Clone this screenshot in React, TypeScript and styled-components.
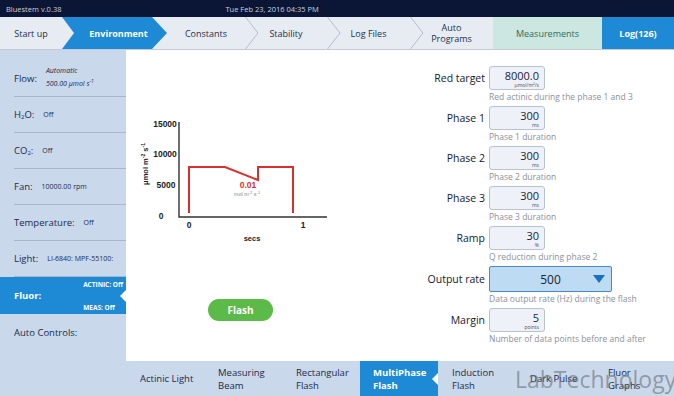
import React from 'react';
import styled, { createGlobalStyle, css } from 'styled-components';

const GlobalStyle = createGlobalStyle`
  html, body {
    margin: 0;
    padding: 0;
    background: #ffffff;
  }
  body {
    font-family: 'Open Sans', 'Noto Sans', sans-serif;
    color: #1b2b4b;
  }
`;

const Screen = styled.div`
  position: relative;
  width: 674px;
  height: 396px;
  overflow: hidden;
  display: grid;
  grid-template-columns: 126px 1fr;
  grid-template-rows: 17px 33px 1fr 35px;
`;

const Header = styled.div`
  grid-column: 1 / 3;
  background: #0b1636;
  color: #c9d0de;
  font-size: 7.5px;
  display: flex;
  align-items: center;
  padding-left: 6px;

  span.date {
    margin-left: 164px;
  }
`;

const TabBar = styled.div`
  grid-column: 1 / 3;
  background: #e7ecf3;
  border-bottom: 1px solid #c4cbd6;
  display: flex;
`;

const Tab = styled.div<{ $w?: number; $variant?: 'active' | 'green' | 'log' }>`
  ${({ $w }) => ($w ? `width: ${$w}px;` : 'flex: 1;')}
  box-sizing: border-box;
  flex-shrink: 0;
  display: flex;
  align-items: stretch;
  font-size: 9px;
  color: #1e2e4c;

  ${({ $variant }) =>
    $variant === 'active' &&
    css`
      background: #1e8ad6;
      color: #ffffff;
      font-weight: 700;
      padding-left: 8px;
      clip-path: polygon(0 0, calc(100% - 15px) 0, 100% 50%, calc(100% - 15px) 100%, 0 100%, 12px 50%);
    `}
  ${({ $variant }) =>
    $variant === 'green' &&
    css`
      background: #cbe7df;
      color: #2e6d5d;
    `}
  ${({ $variant }) =>
    $variant === 'log' &&
    css`
      background: #1e8ad6;
      color: #ffffff;
      font-weight: 700;
    `}
`;

const TabLabel = styled.div`
  flex: 1;
  display: flex;
  align-items: center;
  justify-content: center;
  text-align: center;
  line-height: 11px;
`;

const ChevronLine = styled.svg`
  flex-shrink: 0;
  width: 14px;
  height: 32px;
  margin-right: -14px;
`;

const Sidebar = styled.div`
  grid-column: 1;
  grid-row: 3 / 5;
  background: #c9d8ea;
  padding-top: 10px;
  display: flex;
  flex-direction: column;
`;

const SideRow = styled.div<{ $h?: number; $divider?: boolean }>`
  height: ${({ $h }) => $h ?? 36}px;
  margin-left: 14px;
  display: flex;
  align-items: center;
  gap: 9px;
  white-space: nowrap;
  overflow: hidden;
  box-sizing: border-box;
  ${({ $divider }) => $divider && 'border-bottom: 1px solid #a9b7c9;'}
`;

const SideLabel = styled.span`
  font-size: 9.5px;
  color: #1b2b4b;

  sub {
    font-size: 6px;
    vertical-align: -1px;
  }
`;

const SideValue = styled.span<{ $italic?: boolean }>`
  font-size: 7px;
  color: #1b2b4b;
  line-height: 10px;
  ${({ $italic }) => $italic && 'font-style: italic;'}

  sup {
    font-size: 5px;
  }
`;

const FluorRow = styled.div`
  position: relative;
  height: 37px;
  background: #1e8ad6;
  color: #ffffff;
  display: grid;
  grid-template-columns: 1fr auto;
  grid-template-rows: 1fr 1fr;
  padding: 0 3px 0 14px;
`;

const FluorLabel = styled.span`
  grid-row: 1 / 3;
  align-self: center;
  font-size: 9.5px;
  font-weight: 700;
`;

const FluorState = styled.span<{ $bottom?: boolean }>`
  font-size: 6.5px;
  font-weight: 700;
  align-self: ${({ $bottom }) => ($bottom ? 'end' : 'start')};
  padding: ${({ $bottom }) => ($bottom ? '0 0 2px' : '3px 0 0')};
`;

const Notch = styled.span`
  position: absolute;
  right: 0;
  top: 50%;
  transform: translateY(-50%);
  width: 0;
  height: 0;
  border-top: 6px solid transparent;
  border-bottom: 6px solid transparent;
  border-right: 6px solid #ffffff;
`;

const Content = styled.div`
  grid-column: 2;
  grid-row: 3;
  background: #ffffff;
  display: flex;
`;

const ChartColumn = styled.div`
  width: 294px;
  padding: 60px 0 0 10px;
  box-sizing: border-box;
  display: flex;
  flex-direction: column;
`;

const FlashButton = styled.button`
  margin: 49px 0 0 72px;
  width: 65px;
  height: 22px;
  border: none;
  border-radius: 11px;
  background: #5cba48;
  color: #ffffff;
  font-family: 'Open Sans', sans-serif;
  font-size: 10px;
  font-weight: 700;
  padding: 0;
`;

const Form = styled.div`
  padding-top: 16px;
  display: flex;
  flex-direction: column;
  gap: 2px;
`;

const Field = styled.div`
  display: grid;
  grid-template-columns: 65px auto;
  column-gap: 4px;
  align-items: center;
  justify-items: start;
`;

const FieldLabel = styled.div`
  justify-self: end;
  font-size: 10.5px;
  color: #14202e;
`;

const InputBox = styled.div`
  width: 56px;
  height: 24px;
  box-sizing: border-box;
  background: #eef1f7;
  border: 1px solid #b8c1ce;
  border-radius: 3px;
  padding: 2px 5px 0;
  display: flex;
  flex-direction: column;
  align-items: flex-end;
  justify-content: center;
`;

const InputValue = styled.span`
  font-size: 11px;
  line-height: 12px;
  color: #1b2435;
`;

const InputUnit = styled.span`
  font-size: 5px;
  line-height: 6px;
  color: #4a5060;
`;

const SelectBox = styled.div`
  width: 123px;
  height: 26px;
  box-sizing: border-box;
  background: #bddcf3;
  border: 1px solid #4a87c6;
  border-radius: 2px;
  display: grid;
  grid-template-columns: 24px 1fr 24px;
  align-items: center;
  justify-items: center;
  font-size: 12px;
  color: #1b2435;

  span {
    grid-column: 2;
  }
`;

const Caret = styled.i`
  width: 0;
  height: 0;
  border-left: 6px solid transparent;
  border-right: 6px solid transparent;
  border-top: 8px solid #1d6dc0;
`;

const Hint = styled.div`
  grid-column: 2;
  font-size: 8.5px;
  line-height: 14px;
  color: #8a919c;
  white-space: nowrap;
`;

const BottomBar = styled.div`
  grid-column: 2;
  grid-row: 4;
  background: #c9d8ea;
  display: flex;
`;

const SubTab = styled.div<{ $active?: boolean }>`
  position: relative;
  width: 78px;
  flex-shrink: 0;
  box-sizing: border-box;
  padding-left: 14px;
  display: flex;
  align-items: center;
  font-size: 9.5px;
  line-height: 13px;
  color: #1b2b4b;
  white-space: pre-line;
  ${({ $active }) =>
    $active &&
    css`
      padding-left: 13px;
      background: #1e8ad6;
      color: #ffffff;
      font-weight: 700;
    `}
`;

const Watermark = styled.div`
  position: absolute;
  left: 515px;
  top: 363px;
  font-family: 'Open Sans', sans-serif;
  font-size: 23px;
  color: rgba(105, 111, 122, 0.6);
  white-space: nowrap;
  pointer-events: none;
`;

const Chevron = () => (
  <ChevronLine viewBox="0 0 14 32">
    <polyline points="0.5,0 13,16 0.5,32" fill="none" stroke="#b3bcca" strokeWidth="1" />
  </ChevronLine>
);

const Chart = () => (
  <svg width="200" height="140" viewBox="0 0 200 140">
    <g fontFamily="'Liberation Sans', Arial, sans-serif" fontWeight="700" fill="#222">
      <text x="29" y="17" fontSize="8.5" textAnchor="middle">15000</text>
      <text x="29" y="47" fontSize="8.5" textAnchor="middle">10000</text>
      <text x="30" y="78" fontSize="8.5" textAnchor="middle">5000</text>
      <text x="25" y="109" fontSize="8.5" textAnchor="middle">0</text>
      <text x="53" y="118" fontSize="8.5" textAnchor="middle">0</text>
      <text x="167" y="118" fontSize="8.5" textAnchor="middle">1</text>
      <text x="116" y="131" fontSize="7.5" textAnchor="middle">secs</text>
      <text x="0" y="0" fontSize="7.5" textAnchor="middle" transform="translate(12 54) rotate(-90)">
        μmol m<tspan fontSize="5" dy="-3">-2</tspan><tspan dy="3"> s</tspan><tspan fontSize="5" dy="-3">-1</tspan>
      </text>
    </g>
    <polyline points="43,12 43,107 191,107" fill="none" stroke="#333" strokeWidth="1.4" />
    <polyline
      points="53,103 53,57 89,57 122,70 122,57 157,57 157,103"
      fill="none"
      stroke="#d8302a"
      strokeWidth="2"
      strokeLinejoin="miter"
    />
    <text x="112" y="78" fontSize="8.5" fontWeight="700" fill="#d8302a" textAnchor="middle" fontFamily="'Liberation Sans', Arial, sans-serif">
      0.01
    </text>
    <text x="111" y="86" fontSize="5.5" fill="#8d8d8d" textAnchor="middle" fontFamily="'Liberation Sans', Arial, sans-serif">
      mol m<tspan fontSize="4" dy="-2">-2</tspan><tspan dy="2"> s</tspan><tspan fontSize="4" dy="-2">-1</tspan>
    </text>
  </svg>
);

type FieldData = { label: string; value: string; unit: string; hint: string };

const fields: FieldData[] = [
  { label: 'Red target', value: '8000.0', unit: 'μmol/m²/s', hint: 'Red actinic during the phase 1 and 3' },
  { label: 'Phase 1', value: '300', unit: 'ms', hint: 'Phase 1 duration' },
  { label: 'Phase 2', value: '300', unit: 'ms', hint: 'Phase 2 duration' },
  { label: 'Phase 3', value: '300', unit: 'ms', hint: 'Phase 3 duration' },
  { label: 'Ramp', value: '30', unit: '%', hint: 'Q reduction during phase 2' },
];

const subTabs = [
  'Actinic Light',
  'Measuring\nBeam',
  'Rectangular\nFlash',
  'MultiPhase\nFlash',
  'Induction\nFlash',
  'Dark Pulse',
  'Fluor\nGraphs',
];

const App = () => {
  return (
    <>
      <GlobalStyle />
      <Screen>
        <Header>
          <span>Bluestem v.0.38</span>
          <span className="date">Tue Feb 23, 2016 04:35 PM</span>
        </Header>

        <TabBar>
          <Tab $w={62}>
            <TabLabel>Start up</TabLabel>
          </Tab>
          <Tab $w={105} $variant="active">
            <TabLabel>Environment</TabLabel>
          </Tab>
          <Tab $w={78}>
            <TabLabel>Constants</TabLabel>
            <Chevron />
          </Tab>
          <Tab $w={82}>
            <TabLabel>Stability</TabLabel>
            <Chevron />
          </Tab>
          <Tab $w={83}>
            <TabLabel>Log Files</TabLabel>
            <Chevron />
          </Tab>
          <Tab $w={83}>
            <TabLabel>
              Auto
              <br />
              Programs
            </TabLabel>
          </Tab>
          <Tab $w={109} $variant="green">
            <TabLabel>Measurements</TabLabel>
          </Tab>
          <Tab $variant="log">
            <TabLabel>Log(126)</TabLabel>
          </Tab>
        </TabBar>

        <Sidebar>
          <SideRow $h={37} $divider>
            <SideLabel>Flow:</SideLabel>
            <SideValue $italic>
              Automatic
              <br />
              500.00 μmol s<sup>-1</sup>
            </SideValue>
          </SideRow>
          <SideRow $divider>
            <SideLabel>
              H<sub>2</sub>O:
            </SideLabel>
            <SideValue>Off</SideValue>
          </SideRow>
          <SideRow $divider>
            <SideLabel>
              CO<sub>2</sub>:
            </SideLabel>
            <SideValue>Off</SideValue>
          </SideRow>
          <SideRow $divider>
            <SideLabel>Fan:</SideLabel>
            <SideValue>10000.00 rpm</SideValue>
          </SideRow>
          <SideRow $divider>
            <SideLabel>Temperature:</SideLabel>
            <SideValue>Off</SideValue>
          </SideRow>
          <SideRow $divider>
            <SideLabel>Light:</SideLabel>
            <SideValue>LI-6840: MPF-55100:</SideValue>
          </SideRow>
          <FluorRow>
            <FluorLabel>Fluor:</FluorLabel>
            <FluorState>ACTINIC: Off</FluorState>
            <FluorState $bottom>MEAS: Off</FluorState>
            <Notch />
          </FluorRow>
          <SideRow>
            <SideLabel>Auto Controls:</SideLabel>
          </SideRow>
        </Sidebar>

        <Content>
          <ChartColumn>
            <Chart />
            <FlashButton>Flash</FlashButton>
          </ChartColumn>
          <Form>
            {fields.map((f) => (
              <Field key={f.label}>
                <FieldLabel>{f.label}</FieldLabel>
                <InputBox>
                  <InputValue>{f.value}</InputValue>
                  <InputUnit>{f.unit}</InputUnit>
                </InputBox>
                <Hint>{f.hint}</Hint>
              </Field>
            ))}
            <Field>
              <FieldLabel>Output rate</FieldLabel>
              <SelectBox>
                <span>500</span>
                <Caret />
              </SelectBox>
              <Hint>Data output rate (Hz) during the flash</Hint>
            </Field>
            <Field>
              <FieldLabel>Margin</FieldLabel>
              <InputBox>
                <InputValue>5</InputValue>
                <InputUnit>points</InputUnit>
              </InputBox>
              <Hint>Number of data points before and after</Hint>
            </Field>
          </Form>
        </Content>

        <BottomBar>
          {subTabs.map((t) => (
            <SubTab key={t} $active={t.startsWith('MultiPhase')}>
              <span>{t}</span>
              {t.startsWith('MultiPhase') && <Notch />}
            </SubTab>
          ))}
        </BottomBar>

        <Watermark>LabTechnology</Watermark>
      </Screen>
    </>
  );
};

export default App;
